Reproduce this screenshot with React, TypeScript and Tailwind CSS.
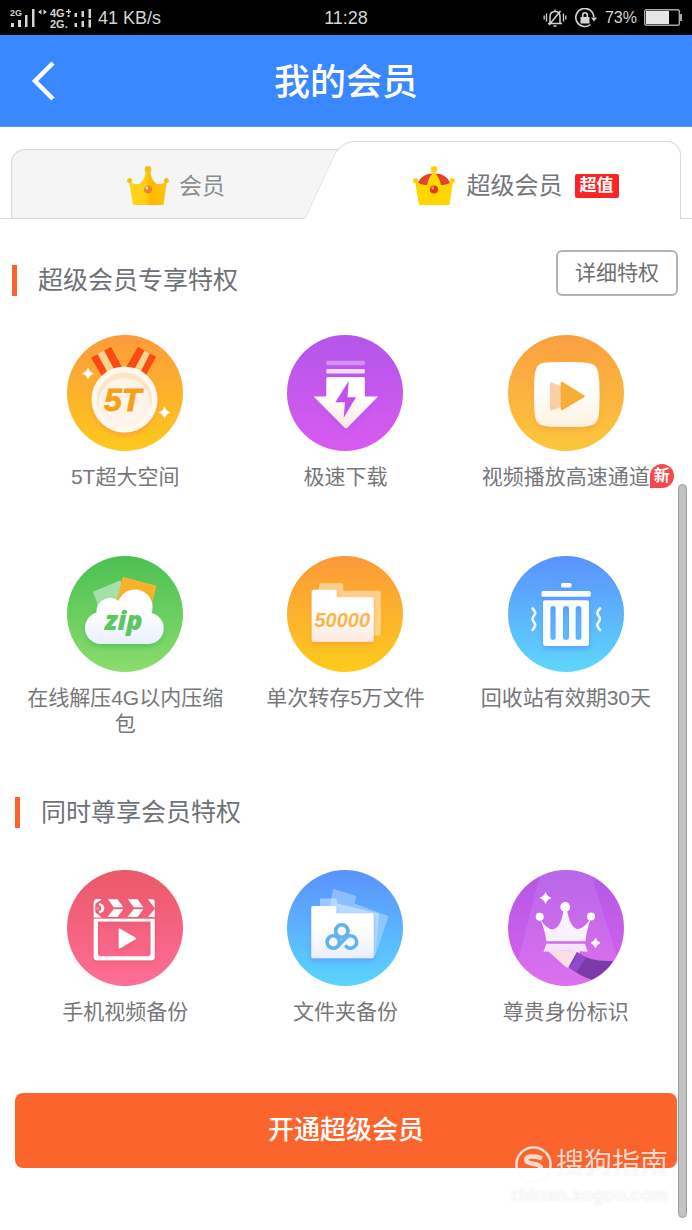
import type { ReactNode } from "react";

const FONT = "font-['Liberation_Sans','Noto_Sans_CJK_SC',sans-serif]";

function SignalIcons() {
  return (
    <svg width="82" height="20" viewBox="10 7 82 20" fill="#d4d4d4" fontFamily="Liberation Sans, sans-serif" fontWeight="700" aria-hidden="true">
      <text x="10" y="15" fontSize="9">2G</text>
      <path d="M11 22h3v4h-3zM18 19h3v7h-3zM25 14h2.500v12h-2.500zM32 8h2.500v18h-2.500z" />
      <path d="M41.500 8.500v5l-3.500-2.500zM43.500 8.500v5l3.500-2.500z" />
      <text x="50" y="16" fontSize="11">4G</text>
      <path d="M66 10h5v1.300h-5zM68 8h1.300v5h-1.300zM67.500 14h2v2h-2z" />
      <text x="50" y="26.500" fontSize="11">2G.</text>
      <path d="M74.500 12h2.500v4h-2.500zM81.500 10h2.500v6h-2.500zM88.500 8h2.500v9h-2.500zM74.500 22h2.500v4h-2.500zM81.500 20h2.500v6h-2.500zM88.500 18.500h2.500v8h-2.500z" />
    </svg>
  );
}

function MuteIcon() {
  return (
    <svg width="24" height="20" viewBox="0 0 24 20" fill="none" stroke="#d4d4d4" strokeWidth="1.500" aria-hidden="true">
      <path d="M5 15.500h14M7 15v-6c0-3.500 2-5.500 5-5.500s5 2 5 5.500v6M12 1.500v2M10.500 18h3M17.500 3 6 17" />
      <path d="M3.500 5.500v8M1.200 7.500v4M20.500 5.500v8M22.800 7.500v4" strokeWidth="1.300" />
    </svg>
  );
}

function RotationLockIcon() {
  return (
    <svg width="24" height="20" viewBox="0 0 24 20" fill="none" stroke="#d4d4d4" strokeWidth="1.600" aria-hidden="true">
      <path d="M16.500 16.500A9 9 0 1 1 19.800 9" />
      <path d="M17 9.500h6L20 13.500z" fill="#d4d4d4" stroke="none" />
      <path d="M6.500 9h9v6.500h-9z" fill="#d4d4d4" stroke="none" />
      <path d="M8.700 9V7a2.300 2.300 0 0 1 4.600 0v2" />
    </svg>
  );
}

function BatteryIcon() {
  return (
    <svg width="38" height="17" viewBox="0 0 38 17" aria-hidden="true">
      <rect x="0.700" y="0.700" width="34.600" height="15.600" rx="1.500" fill="none" stroke="#a8a8a8" strokeWidth="1.400" />
      <rect x="2" y="2" width="23" height="13" fill="#e6e6e6" />
      <rect x="36" y="5" width="2" height="7" fill="#a8a8a8" />
    </svg>
  );
}

function Crown({ jewelled = false }: { jewelled?: boolean }) {
  const ball = jewelled ? "#ffd000" : "#f9be14";
  return (
    <svg width="42" height="40" viewBox="0 0 42 40" aria-hidden="true">
      <defs>
        <linearGradient id="gold" x1="0" x2="1" y1="0" y2="0">
          <stop offset="0" stopColor="#ffd51f" />
          <stop offset="0.450" stopColor="#ffcf12" />
          <stop offset="0.550" stopColor="#fdb900" />
          <stop offset="1" stopColor="#fdc40d" />
        </linearGradient>
      </defs>
      {jewelled && <path d="M4.500 18C7 10.500 13 7.500 21 7.500s14 3 16.500 10.500l-8.500 6H13z" fill="#e4422c" />}
      {jewelled ? (
        <path d="M2 15.500Q10 19.500 14 19 15.500 11 21 6q5.500 5 7 13 4 .500 12-3.500L36.500 39H6z" fill="#ffd600" />
      ) : (
        <path d="M2 15q7 5 11 2.500Q17.500 14 19 5h4q1.500 9 6 12.500 4 2.500 11-2.500L36.500 39H6z" fill="url(#gold)" />
      )}
      <circle cx="2.600" cy="14.600" r="2.500" fill={ball} />
      <circle cx="21" cy="3.400" r="3.300" fill={ball} />
      <circle cx="39.400" cy="14.600" r="2.500" fill={ball} />
      <circle cx="21" cy="23.500" r="4" fill={jewelled ? "#e8340c" : "#e8842a"} />
      <circle cx="19.800" cy="22" r="1.400" fill={jewelled ? "#ff9c7a" : "#ffe0b4"} />
    </svg>
  );
}

const star = (x: number, y: number, r: number) =>
  `M${x} ${y - r}Q${x + 1.5} ${y - 1.5} ${x + r} ${y}Q${x + 1.5} ${y + 1.5} ${x} ${y + r}Q${x - 1.5} ${y + 1.5} ${x - r} ${y}Q${x - 1.5} ${y - 1.5} ${x} ${y - r}Z`;

interface DiscProps {
  id: string;
  from: string;
  to: string;
  face?: string;
  children: ReactNode;
}

function Disc({ id, from, to, face = "#ffffff", children }: DiscProps) {
  return (
    <svg width="116" height="116" viewBox="0 0 116 116" aria-hidden="true">
      <defs>
        <linearGradient id={id} x1="0" x2="0" y1="0" y2="1">
          <stop offset="0" stopColor={from} />
          <stop offset="1" stopColor={to} />
        </linearGradient>
        <linearGradient id={`${id}-face`} x1="0" x2="0" y1="0" y2="1">
          <stop offset="0.400" stopColor="#ffffff" />
          <stop offset="1" stopColor={face} />
        </linearGradient>
        <filter id={`${id}-shade`} x="-20%" y="-20%" width="140%" height="150%">
          <feDropShadow dx="0" dy="3" stdDeviation="2.500" floodColor={from} floodOpacity="0.700" />
        </filter>
        <clipPath id={`${id}-clip`}>
          <circle cx="58" cy="58" r="58" />
        </clipPath>
      </defs>
      <circle cx="58" cy="58" r="58" fill={`url(#${id})`} />
      {children}
    </svg>
  );
}

function SpaceIcon() {
  return (
    <Disc id="space" from="#fc9a3c" to="#fcc91c" face="#fde3c4">
      <path d="M24 22.700 44 11.700 56 34 36 43zM71 11.700 89 21.700 78 42 58 34z" fill="#fb4a12" />
      <path d="M30.500 19 37 15.500 48 36 42 40zM77.500 15.500 83 18.500 73 38 67 35z" fill="#fbd58c" />
      <circle cx="57.500" cy="64.500" r="33" fill="#fff8ec" filter="url(#space-shade)" />
      <circle cx="57.500" cy="65" r="27.500" fill="#fde6c8" />
      <circle cx="57.500" cy="69" r="26" fill="#fffaf3" opacity="0.700" />
      <text x="37" y="76" fontSize="32" fontFamily="Liberation Sans, sans-serif" fontWeight="700" fontStyle="italic" fill="#f6a016" stroke="#f6a016" strokeWidth="0.800">5T</text>
      <path d={star(21, 38.5, 6)} fill="#fff" />
      <path d={star(97.5, 77.5, 6)} fill="#fff" />
    </Disc>
  );
}

function DownloadIcon() {
  return (
    <Disc id="download" from="#b356ea" to="#d95af0" face="#fae6dc">
      <rect x="39.300" y="25.700" width="38.500" height="4.600" rx="1" fill="#fff" opacity="0.350" />
      <rect x="39.300" y="34" width="38.500" height="4.500" rx="1" fill="#fff" opacity="0.800" />
      <path d="M39.300 43.500q0-1.500 1.500-1.500h35.500q1.500 0 1.500 1.500v18H91L60.500 92.500q-1.500 1.500-3 0L26.700 61.500h12.600z" fill="url(#download-face)" filter="url(#download-shade)" />
      <path d="M61.700 46 48.300 67.300H58L56.700 82.700 69 62.300h-8.500z" fill="#c44fee" />
    </Disc>
  );
}

function PlayIcon() {
  return (
    <Disc id="play" from="#fb9f42" to="#fbc73b" face="#fcf1e0">
      <path d="M58.500 27c17 0 24 .500 28 3.500s5 11 5 29-.500 25-4 28.500-11 4-29 4-25-.500-28.500-4-4-11-4-29 1-25 4-28.500 11.500-3.500 28.500-3.500z" fill="url(#play-face)" filter="url(#play-shade)" />
      <path d="M42 48.500q0-1.500 1.500-1L58 53v17l-14.500 5.500q-1.500 0-1.500-1.500z" fill="#fbcfa4" />
      <path d="M52.700 48q0-2 2-1L76 60.200q1.500 1 0 2L54.700 75q-2 1-2-1z" fill="#faad35" />
    </Disc>
  );
}

function ZipIcon() {
  return (
    <Disc id="zip" from="#4bc054" to="#8cdc6e" face="#e9effe">
      <path d="M26 35.700 53.500 24.300 62 50 35 60z" fill="#a5dfa9" />
      <path d="M55.700 20.700 89.300 29.700 84 54 50 44z" fill="#fcb12c" />
      <path d="M18 72a16 16 0 0 1 11.500-15.500A13.500 13.500 0 0 1 51.500 45 17.500 17.500 0 0 1 84.500 57 15.700 15.700 0 0 1 80.500 88H34A16 16 0 0 1 18 72z" fill="url(#zip-face)" filter="url(#zip-shade)" />
      <text x="37.500" y="74" fontSize="27" fontFamily="Open Sans, sans-serif" fontWeight="800" fontStyle="italic" fill="#5cc662">zip</text>
    </Disc>
  );
}

function TransferIcon() {
  return (
    <Disc id="transfer" from="#fc993b" to="#fccb1c" face="#fdeadf">
      <path d="M32 29q0-1.700 1.700-1.700h21q1.600 0 1.600 1.700v5.700h36q1.500 0 1.500 1.500V78q0 1.500-1.500 1.500H32z" fill="#fff" opacity="0.450" />
      <path d="M24.700 35.200q0-1.500 1.500-1.500h22q1.500 0 1.500 1.500v6h35.500q1.500 0 1.500 1.500v41.500q0 1.500-1.500 1.500h-59q-1.500 0-1.500-1.500z" fill="url(#transfer-face)" filter="url(#transfer-shade)" />
      <text x="27.500" y="71" fontSize="20" fontFamily="Liberation Sans, sans-serif" fontWeight="700" fontStyle="italic" fill="#fab550">50000</text>
    </Disc>
  );
}

function TrashIcon() {
  return (
    <Disc id="trash" from="#5b91fd" to="#5ed7fb">
      <g fill="#fafcff" filter="url(#trash-shade)">
        <rect x="53" y="27" width="10.500" height="4.500" rx="1.500" />
        <rect x="33.500" y="35" width="49.200" height="5.800" rx="1.500" />
        <path fillRule="evenodd" d="M37 44.300h42q2 0 2 2V87q0 3-3 3H38q-3 0-3-3V46.300q0-2 2-2zM45 50q-2.700 0-2.700 2.700v28.600q0 2.700 2.700 2.700t2.700-2.700V52.700Q47.700 50 45 50zm13 0q-3 0-3 2.700v28.600q0 2.700 3 2.700t3-2.700V52.700Q61 50 58 50zm12.500 0q-2.900 0-2.900 2.700v28.600q0 2.700 2.900 2.700t2.900-2.700V52.700q0-2.700-2.900-2.700z" />
      </g>
      <path d="M24.500 52.500q4 4 2 6.500t-2 4 2 4-2 7M92 52.500q-4 4-2 6.500t2 4-2 4 2 7" fill="none" stroke="#fff" strokeWidth="2.600" strokeLinecap="round" opacity="0.900" />
    </Disc>
  );
}

function VideoIcon() {
  return (
    <Disc id="video" from="#ea5868" to="#fe6e98">
      <g fill="#fff" filter="url(#video-shade)">
        <path fillRule="evenodd" d="M26.700 48.700h61v38.300q0 3.300-3.300 3.300H30q-3.300 0-3.300-3.300zM31 51.500v32q0 2.800 2.800 2.800h47q2.800 0 2.800-2.800v-32z" />
        <path fillRule="evenodd" d="M26.700 47.500V32.500q0-3.500 3.500-3.500h4.500q-1.200 2-4.200 3-2.300 1-2.300 3.500v5.500q0 2.500 2.500 3.500 2.500 1 3.500 3z" />
        <path d="M32.500 33q4.800 1.500 4.800 5.300T32.500 43.500l-.700-2q2.700-1 2.700-3.200T31.800 35z" />
        <circle cx="30.700" cy="38.200" r="1.300" opacity="0.400" />
        <path d="M41 29.300h9.500l5.700 7.900h-9.500zM46.700 39.300h9.500L50.500 47H40.500zM61 29.300h9.500l5.700 7.900h-9.500zM66.700 39.300h9.500L70.500 47H60.500zM81 29.300h4q2.700 0 2.700 3v6zM87.700 39v8H81z" />
        <path d="M51.700 59.500q0-1.500 1.500-.800l15.500 9q1.200.8 0 1.600l-15.500 9q-1.500.700-1.500-.800z" />
      </g>
    </Disc>
  );
}

function FolderIcon() {
  return (
    <Disc id="folder" from="#5b91fd" to="#5bd5fd" face="#e9eefe">
      <path d="M46 18.700 69.300 26 67.500 33.500 100 45.500q1.500.7 1 2L88 86H34z" fill="#fff" opacity="0.300" />
      <path d="M33 28.500h16.500l.5 5L90.500 43q1.500.5 1.500 2l-4 41H33z" fill="#fff" opacity="0.400" />
      <path d="M24.300 37.500q0-1.500 1.500-1.500h22q1.500 0 1.500 1.500v5.800H85q1.700 0 1.700 1.700v41.700q0 1.600-1.700 1.600H25.800q-1.500 0-1.500-1.500z" fill="url(#folder-face)" filter="url(#folder-shade)" />
      <g fill="none" stroke="#62b3ef" strokeWidth="3.600">
        <circle cx="54.800" cy="61" r="6.200" />
        <circle cx="46.300" cy="72" r="6.200" />
        <path d="M51 76 58.700 68a6.200 6.200 0 1 1 .5 8.500" strokeLinecap="round" />
      </g>
    </Disc>
  );
}

function IdentityIcon() {
  return (
    <Disc id="identity" from="#b158e8" to="#da62ec">
      <g clipPath="url(#identity-clip)">
        <path d="M33 0h49l36 116H4z" fill="#fff" opacity="0.090" />
        <path d="M40 81h32l-3 10-8 6.500q-2 1-5-2z" fill="#fae0e4" />
        <path d="M69 82q12 10 36 9l-12 20-10-1.500Q72 106 60.500 97z" fill="#7a3ba8" />
        <path d="M69 82q5 4 9 6l-9.500 14-8-5q7-6 8.500-15z" fill="#8f4bc8" />
      </g>
      <g fill="#fff">
        <circle cx="31.700" cy="46.700" r="4" />
        <circle cx="57.200" cy="37" r="4.900" />
        <circle cx="83" cy="46.500" r="4" />
        <path d="M31.500 48q8 13 14.500 11 7-2 9.500-19h3.500q3 17 10 19 6 1 14-11-4.500 12-5.500 23.300H38.300Q37 59 31.500 48z" fill="#f9f1fe" />
        <path d="M38.300 73.700H77l2.500 8q-22-2-44 0z" fill="#f5e3fb" />
        <path d={star(37.5, 28, 6)} />
        <path d={star(87.5, 73, 5)} />
      </g>
    </Disc>
  );
}

interface Privilege {
  label: string;
  icon: ReactNode;
  isNew?: boolean;
}

const superPrivileges: Privilege[] = [
  { label: "5T超大空间", icon: <SpaceIcon /> },
  { label: "极速下载", icon: <DownloadIcon /> },
  { label: "视频播放高速通道", icon: <PlayIcon />, isNew: true },
  { label: "在线解压4G以内压缩包", icon: <ZipIcon /> },
  { label: "单次转存5万文件", icon: <TransferIcon /> },
  { label: "回收站有效期30天", icon: <TrashIcon /> },
];

const memberPrivileges: Privilege[] = [
  { label: "手机视频备份", icon: <VideoIcon /> },
  { label: "文件夹备份", icon: <FolderIcon /> },
  { label: "尊贵身份标识", icon: <IdentityIcon /> },
];

function PrivilegeGrid({ items }: { items: Privilege[] }) {
  return (
    <ul className="grid grid-cols-3 gap-y-[66px] pr-[16px] pl-[15px]">
      {items.map((item) => (
        <li key={item.label} className="flex flex-col items-center gap-[13px]">
          {item.icon}
          <p className="relative max-w-[200px] text-center text-[21px] leading-[26px] text-[#77777a]">
            {item.label}
            {item.isNew && (
              <span className="absolute top-0 left-full size-6 rounded-full rounded-bl-sm bg-[#f5484b] text-center text-base leading-6 font-bold text-white">
                新
              </span>
            )}
          </p>
        </li>
      ))}
    </ul>
  );
}

function SectionTitle({ children }: { children: ReactNode }) {
  return (
    <h2 className="flex items-center gap-[21px] text-[25px] leading-[31px] text-[#6f7178]">
      <span className="h-[31px] w-[5px] bg-[#fb642d]" />
      {children}
    </h2>
  );
}

export default function App() {
  return (
    <div className={`relative flex min-h-screen flex-col bg-white ${FONT}`}>
      <div className="grid h-[35px] grid-cols-3 items-center bg-black px-[10px] text-lg leading-none text-[#d4d4d4]">
        <div className="flex items-center gap-[6px] whitespace-nowrap">
          <SignalIcons />
          <span>41 KB/s</span>
        </div>
        <span className="text-center">11:28</span>
        <div className="flex items-center justify-end gap-[7px]">
          <MuteIcon />
          <RotationLockIcon />
          <span className="text-base leading-none">73%</span>
          <BatteryIcon />
        </div>
      </div>

      <header className="grid h-[92px] grid-cols-[60px_1fr_60px] items-center border-b border-[#5f97ea] bg-[#3a88ff] text-white">
        <button type="button" aria-label="返回" className="flex justify-end pr-[5px]">
          <svg width="24" height="40" viewBox="0 0 24 40" fill="none" stroke="currentColor" strokeWidth="4.500" aria-hidden="true">
            <path d="M22 2 4 20l18 18" />
          </svg>
        </button>
        <h1 className="pt-1 text-center text-4xl leading-[46px] font-medium">我的会员</h1>
      </header>

      <div role="tablist" className="relative mt-[14px] grid grid-cols-2 items-end px-[11px]">
        <span className="absolute inset-x-0 bottom-0 h-px bg-[#dadada]" />
        <button
          type="button"
          role="tab"
          aria-selected="false"
          className="relative flex h-[70px] items-center justify-center gap-[10px] rounded-tl-[14px] border border-r-0 border-[#dadada] bg-[#f5f5f5] pt-1 pr-[6px] text-[23px] leading-8 text-[#8c8d90]"
        >
          <Crown />
          会员
        </button>
        <button
          type="button"
          role="tab"
          aria-selected="true"
          className="relative flex h-[78px] items-center justify-center text-2xl leading-8 text-[#74767c]"
        >
          <span className="absolute top-0 bottom-0 left-[-42px] w-[80px] origin-bottom-left -skew-x-[25deg] rounded-tl-[14px] border-t border-l border-[#dadada] bg-white" />
          <span className="absolute top-0 right-0 bottom-0 left-[14px] rounded-tr-[14px] border-t border-r border-[#dadada] bg-white" />
          <span className="relative flex items-center gap-[12px] pt-3 pl-1">
            <Crown jewelled />
            超级会员
            <span className="rounded-xs bg-[#fa2424] px-[5px] text-[17px] leading-6 font-bold text-white">超值</span>
          </span>
        </button>
      </div>

      <main className="flex flex-col">
        <section>
          <div className="mt-[31px] mb-[39px] flex items-end justify-between pr-[14px] pl-[12px]">
            <SectionTitle>超级会员专享特权</SectionTitle>
            <button type="button" className="rounded-md border-2 border-[#b4b4b4] px-[17px] text-[21px] leading-[42px] text-[#707070]">
              详细特权
            </button>
          </div>
          <PrivilegeGrid items={superPrivileges} />
        </section>

        <section>
          <div className="mt-[60px] mb-[42px] pl-[15px]">
            <SectionTitle>同时尊享会员特权</SectionTitle>
          </div>
          <PrivilegeGrid items={memberPrivileges} />
        </section>

        <button type="button" className="mx-[15px] mt-[68px] mb-[61px] rounded-lg bg-[#fc642d] text-[26px] leading-[75px] font-medium text-white">
          开通超级会员
        </button>
      </main>

      <span className="absolute top-[484px] right-[5px] bottom-[12px] w-[9px] rounded-full border border-[#9c9c9c] bg-[#c2c2c2]" />

      <div className="pointer-events-none absolute right-[24px] bottom-[23px] text-white/75 [text-shadow:0_0_2px_rgba(0,0,0,0.1)]">
        <div className="flex items-center justify-end gap-[4px] text-[28px] leading-[38px]">
          <svg width="37" height="37" viewBox="0 0 37 37" fill="none" stroke="currentColor" aria-hidden="true">
            <circle cx="18.500" cy="18.500" r="17.300" stroke="#eeeeee" strokeWidth="2.600" opacity="0.400" />
            <circle cx="18.500" cy="18.500" r="17" strokeWidth="2" />
            <path d="M27 12.500q-5-2.500-11-2-5 .5-5 3.500 0 2.500 7 3.800 8 1.400 8 4.400 0 3.300-6 4-6 .3-11-2.200" strokeWidth="4.500" />
          </svg>
          搜狗指南
        </div>
        <div className="text-right text-lg leading-6 font-bold">zhinan.sogou.com</div>
      </div>
    </div>
  );
}
